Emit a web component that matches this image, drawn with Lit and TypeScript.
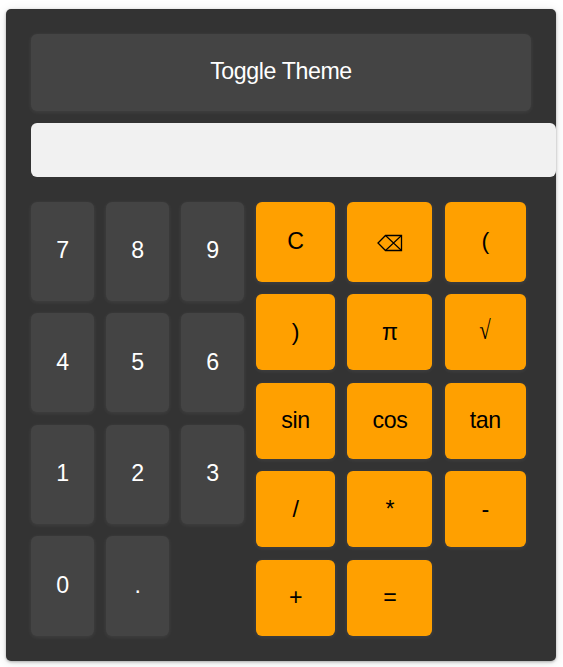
import { LitElement, html, css } from "lit";
import { customElement, state } from "lit/decorators.js";
import { classMap } from "lit/directives/class-map.js";

const DIGITS = ["7", "8", "9", "4", "5", "6", "1", "2", "3", "0", "."];
const OPERATORS = ["C", "⌫", "(", ")", "π", "√", "sin", "cos", "tan", "/", "*", "-", "+", "="];

@customElement("app-root")
export class AppRoot extends LitElement {
  @state() private value = "";
  @state() private light = false;

  static styles = css`
    :host {
      display: block;
      box-sizing: border-box;
      height: 667px;
      padding: 9px 7px 6px 6px;
      overflow: hidden;
      background: #fff;
      font-family: "Liberation Sans", Arial, sans-serif;
    }
    .calculator {
      box-sizing: border-box;
      width: 550px;
      height: 652px;
      padding: 25px;
      border-radius: 5px;
      background: #333;
      box-shadow: 0 1px 3px rgba(0, 0, 0, 0.3), 0 2px 12px rgba(0, 0, 0, 0.1);
    }
    .calculator.light {
      background: #ddd;
    }
    button {
      display: flex;
      align-items: center;
      justify-content: center;
      box-sizing: border-box;
      margin: 0;
      padding: 0;
      border: 0;
      border-radius: 6px;
      background: #444;
      color: #fff;
      font: 23.2px/26px "Liberation Sans", Arial, sans-serif;
      letter-spacing: -0.4px;
      box-shadow: 0 1px 4px rgba(255, 255, 255, 0.08);
    }
    .theme {
      width: 500px;
      height: 77px;
      padding-bottom: 4px;
    }
    .display {
      display: block;
      box-sizing: border-box;
      width: 525px;
      height: 54px;
      margin: 12px 0 25px;
      padding: 12px;
      border: 0;
      border-radius: 6px;
      background: #f1f1f1;
      font: 22.5px "Liberation Sans", Arial, sans-serif;
      text-align: right;
    }
    .keys {
      display: flex;
      gap: 12px;
    }
    .digits {
      display: grid;
      grid-template-columns: 63px 63px 63px;
      grid-template-rows: 99px 99px 99px 100px;
      column-gap: 12px;
      row-gap: 12.4px;
    }
    .digits button {
      padding-bottom: 2px;
    }
    .digits button:nth-child(-n + 3) {
      padding-bottom: 4px;
    }
    .operators {
      display: grid;
      grid-template-columns: 79px 85px 81px;
      grid-template-rows: 80px 76.1px 76.1px 76.1px 76.1px;
      column-gap: 12.4px;
      row-gap: 12.35px;
    }
    .operators button {
      background: #ffa000;
      color: #000;
      padding-bottom: 1px;
    }
    .operators button:nth-child(-n + 3) {
      padding-bottom: 3px;
    }
    .icon {
      display: block;
      margin-top: 5px;
    }
    .root {
      font-family: "Liberation Serif", "Times New Roman", serif;
      font-size: 22px;
      transform: translateY(-1px) scale(0.95, 1.2);
    }
  `;

  private press(key: string) {
    if (key === "C") this.value = "";
    else if (key === "⌫") this.value = this.value.slice(0, -1);
    else this.value += key;
  }

  private label(key: string) {
    if (key === "⌫") {
      return html`<svg class="icon" width="26" height="18" viewBox="0 0 26 18" fill="none" stroke="#000">
        <path stroke-width="1.3" d="M8.5 1.5H24.5V16.5H8.5L1 9Z" />
        <path stroke-width="1.1" d="M8.5 1.5L24.5 16.5M8.5 16.5L24.5 1.5" />
      </svg>`;
    }
    return html`<span class=${classMap({ root: key === "√" })}>${key}</span>`;
  }

  private renderKey(key: string) {
    return html`<button @click=${() => this.press(key)}>${this.label(key)}</button>`;
  }

  render() {
    return html`
      <div class=${classMap({ calculator: true, light: this.light })}>
        <button class="theme" @click=${() => (this.light = !this.light)}>Toggle Theme</button>
        <input class="display" readonly .value=${this.value} />
        <div class="keys">
          <div class="digits">${DIGITS.map((k) => this.renderKey(k))}</div>
          <div class="operators">${OPERATORS.map((k) => this.renderKey(k))}</div>
        </div>
      </div>
    `;
  }
}
